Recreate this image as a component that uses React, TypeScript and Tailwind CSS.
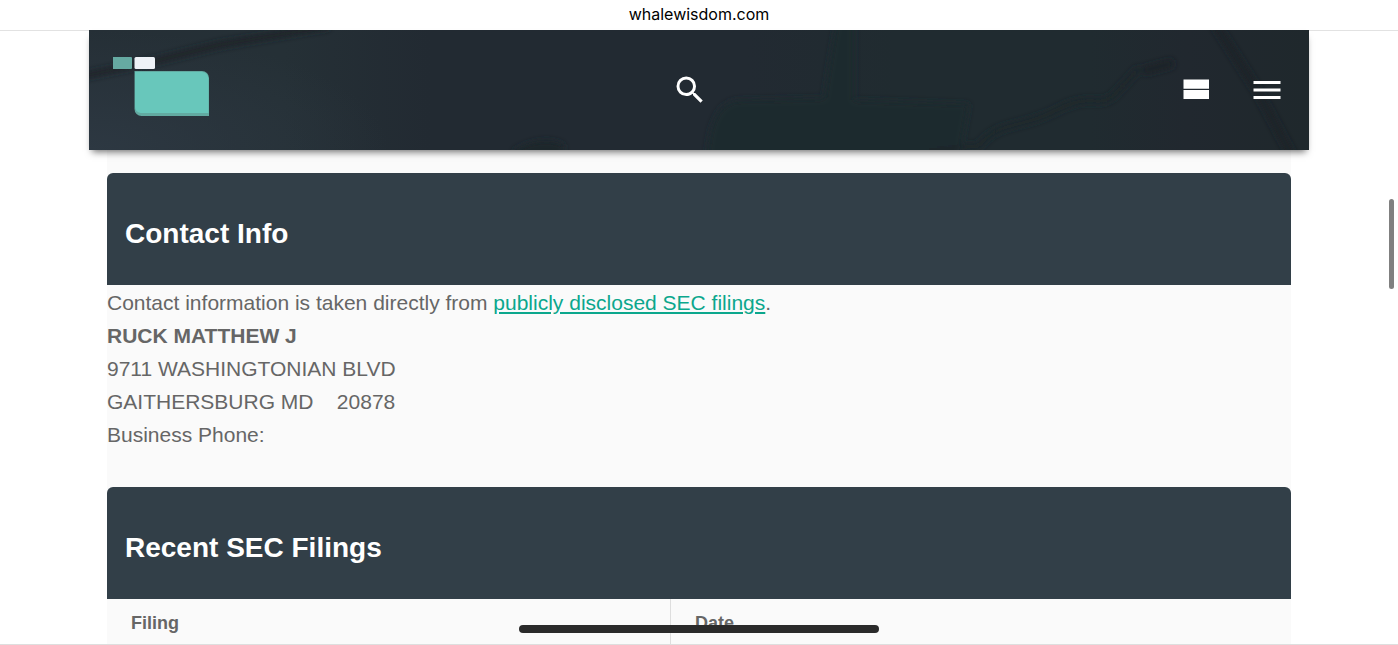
import type { ReactNode } from 'react'
import { MdMenu, MdSearch } from 'react-icons/md'

interface IconButtonProps {
  label: string
  children: ReactNode
}

function IconButton({ label, children }: IconButtonProps) {
  return (
    <button type="button" aria-label={label} className="p-1.5 text-white">
      {children}
    </button>
  )
}

function ViewStreamIcon() {
  return (
    <svg className="size-9" viewBox="0 0 36 36" fill="currentColor" aria-hidden="true">
      <path d="M6.500 7.500H32v9.200H6.500zM6.500 18H32v9H6.500z" />
    </svg>
  )
}

function Logo() {
  return (
    <svg className="h-[60px] w-24" viewBox="0 0 96 60" aria-hidden="true">
      <rect x="-0.5" y="1" width="19.5" height="12" rx="1" fill="#66aaa2" />
      <rect x="21.5" y="1" width="20.5" height="12" rx="1.5" fill="#eef2f7" />
      <path d="M21.5 15H89a7 7 0 0 1 7 7v38H28.500a7 7 0 0 1-7-7z" fill="#62aaa1" />
      <path d="M22 16H89a6.500 6.500 0 0 1 6.500 6.500V57H27.500a6 6 0 0 1-5.500-6z" fill="#68c7bb" />
    </svg>
  )
}

// Dark photo-like texture behind the header
function HeaderBackdrop() {
  return (
    <svg
      className="absolute inset-0 h-full w-full"
      viewBox="0 0 1220 120"
      preserveAspectRatio="none"
      aria-hidden="true"
    >
      <defs>
        <linearGradient id="base" x1="0" y1="0" x2="1" y2="0">
          <stop offset="0" stopColor="#252f36" />
          <stop offset="0.16" stopColor="#253036" />
          <stop offset="0.28" stopColor="#222a32" />
          <stop offset="0.54" stopColor="#222a32" />
          <stop offset="0.66" stopColor="#202b30" />
          <stop offset="0.82" stopColor="#202b30" />
          <stop offset="0.9" stopColor="#21282f" />
          <stop offset="1" stopColor="#1f282c" />
        </linearGradient>
        <radialGradient id="glow" cx="0" cy="1" r="1">
          <stop offset="0" stopColor="#2d3842" />
          <stop offset="1" stopColor="#2d3842" stopOpacity="0" />
        </radialGradient>
        <filter id="soft" x="-10%" y="-30%" width="120%" height="160%">
          <feGaussianBlur stdDeviation="3" />
        </filter>
      </defs>
      <rect width="1220" height="120" fill="url(#base)" />
      <rect width="300" height="120" fill="url(#glow)" />
      <g filter="url(#soft)" fill="none">
        <path d="M-10 47L70 30L130 15L240-4" stroke="#1a2226" strokeWidth="6" />
        <path d="M618 130Q620 72 650 70L735 68Q742 20 748-10H765V70L880 74L870 130Z" fill="#1e2a2f" />
        <path d="M425 120Q455 104 475 115V126H425Z" fill="#1b282c" />
        <path d="M840 120L890 116C910 90 930 100 968 80S1010 82 1028 62L1050 38" stroke="#1b252a" strokeWidth="5" />
        <path d="M1054 41L1084 33" stroke="#1a2127" strokeWidth="8" />
        <path d="M1126-6L1168 60L1204 128" stroke="#1a2126" strokeWidth="7" />
      </g>
    </svg>
  )
}

function PanelTitle({ children }: { children: ReactNode }) {
  return (
    <div className="flex h-28 items-center rounded-t-md bg-[#323f48] px-[18px] pt-2.5">
      <h2 className="text-[28px] leading-9 font-bold text-white">{children}</h2>
    </div>
  )
}

export default function App() {
  return (
    <div className="flex h-screen flex-col overflow-hidden border-b border-[#dedede] bg-white font-['Liberation_Sans',Arial,sans-serif]">
      <div className="h-[31px] shrink-0 border-b border-[#e2e2e2] text-center font-[Inter,sans-serif] text-base leading-7 text-black">
        whalewisdom.com
      </div>

      <div className="mx-[89px] -mt-px">
        <header className="relative z-10 flex h-[120px] items-center justify-between bg-[#222a32] pr-[18px] pl-6 shadow-[0_5px_7px_-3px_rgba(0,0,0,0.55)]">
          <HeaderBackdrop />
          <a href="#" aria-label="Home" className="relative pb-2">
            <Logo />
          </a>
          <div className="relative flex">
            <IconButton label="Search">
              <MdSearch size={36} />
            </IconButton>
          </div>
          <div className="relative flex gap-6">
            <IconButton label="Views">
              <ViewStreamIcon />
            </IconButton>
            <IconButton label="Menu">
              <MdMenu size={36} />
            </IconButton>
          </div>
        </header>

        <main className="mx-[18px] bg-[#fafafa] pt-[23px] text-[#666]">
          <section className="pb-9">
            <PanelTitle>Contact Info</PanelTitle>
            <div className="pt-px text-[21px] leading-[33px]">
              <p>
                Contact information is taken directly from{' '}
                <a href="#" className="text-[#0ba78d] underline">publicly disclosed SEC filings</a>.
              </p>
              <p className="font-bold">RUCK MATTHEW J</p>
              <p>9711 WASHINGTONIAN BLVD</p>
              <p>GAITHERSBURG MD &nbsp;&nbsp; 20878</p>
              <p>Business Phone:</p>
            </div>
          </section>

          <section>
            <PanelTitle>Recent SEC Filings</PanelTitle>
            <table className="w-full table-fixed text-left text-lg">
              <thead>
                <tr className="h-12">
                  <th className="w-[47.6%] px-6">Filing</th>
                  <th className="border-l border-[#dedede] px-6">Date</th>
                </tr>
              </thead>
            </table>
          </section>
        </main>
      </div>

      {/* Scroll thumb and home indicator */}
      <div className="fixed top-[199px] right-1 h-[90px] w-[5px] rounded-full bg-[#808080]" />
      <div className="fixed bottom-3 left-1/2 z-20 h-2 w-[360px] -translate-x-1/2 rounded-full bg-[#2a2a2a]" />
    </div>
  )
}
